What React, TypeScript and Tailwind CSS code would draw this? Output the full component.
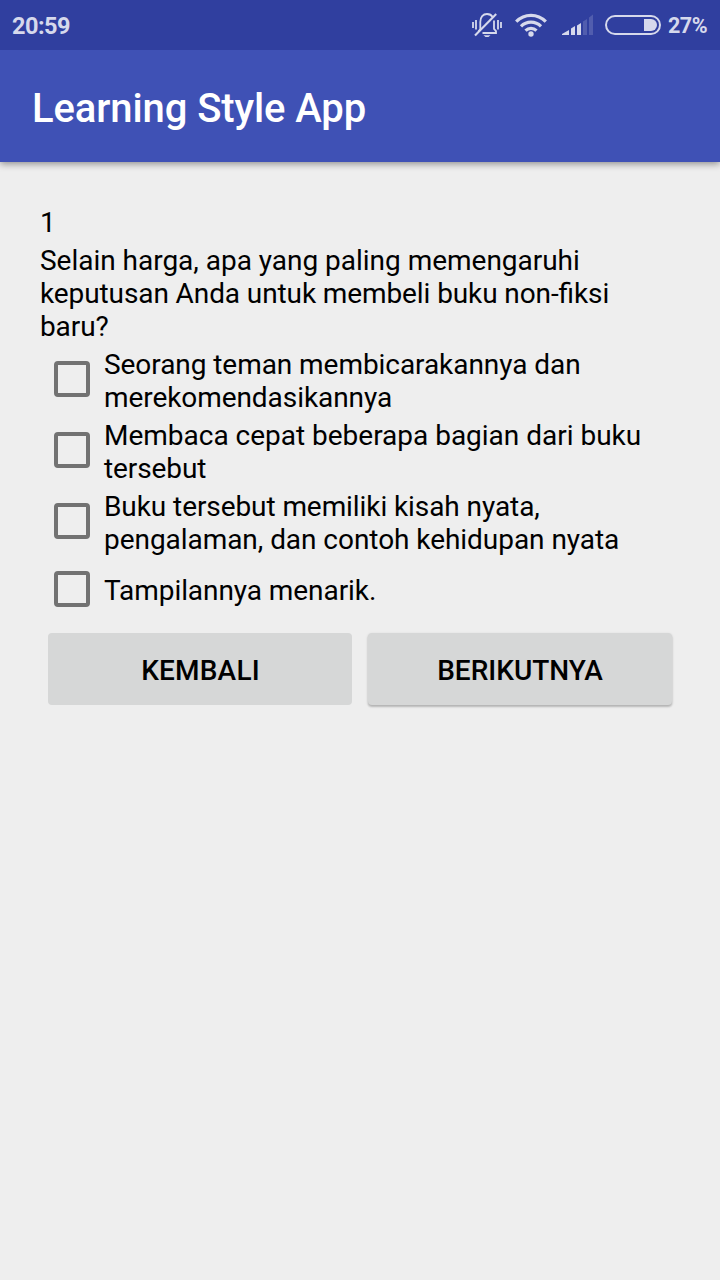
import { useState } from "react";

const options = [
  {
    lines: [
      { text: "Seorang teman membicarakannya dan", tracking: "tracking-[-0.06px]" },
      { text: "merekomendasikannya", tracking: "tracking-[-0.07px]" },
    ],
  },
  {
    lines: [
      { text: "Membaca cepat beberapa bagian dari buku", tracking: "tracking-[-0.01px]" },
      { text: "tersebut", tracking: "tracking-[-0.1px]" },
    ],
  },
  {
    lines: [
      { text: "Buku tersebut memiliki kisah nyata,", tracking: "tracking-[-0.08px]" },
      { text: "pengalaman, dan contoh kehidupan nyata", tracking: "tracking-[-0.05px]" },
    ],
  },
  { lines: [{ text: "Tampilannya menarik.", tracking: "tracking-[-0.07px]" }] },
];

function SilentIcon() {
  return (
    <svg className="ml-auto h-[26px] w-[30px]" viewBox="0 0 30 26" fill="none" stroke="currentColor" strokeWidth="1.8">
      <path d="M6.500 19.500L8.300 17V10C8.300 5 11 2 15 2C17.800 2 19.500 3 20.600 5M22 8.500V17L24 19V21H10.500" />
      <path d="M3 23.500L24.200 2" strokeWidth="2.1" />
      <path d="M11.500 23.200H18.500L16.500 24.900H13.500Z" fill="currentColor" stroke="none" />
      <path d="M1 10V16M4 8V17.500M26 8V17.500M29 10V16" strokeWidth="1.8" />
    </svg>
  );
}

function WifiIcon() {
  return (
    <svg className="ml-[13px] h-6 w-8" viewBox="0 0 32 24" fill="none" stroke="currentColor" strokeWidth="3.2">
      <path d="M1.2 8.7C9.5 0.2 22.500 0.2 30.8 8.7" />
      <path d="M6 13.3C11.700 7.700 20.300 7.700 26 13.3" />
      <path d="M10.500 17.700C13.600 14.700 18.400 14.700 21.500 17.700" />
      <circle cx="16" cy="21" r="2.7" fill="currentColor" stroke="none" />
    </svg>
  );
}

function SignalIcon() {
  return (
    <svg className="ml-[15px] h-[22px] w-8" viewBox="0 0 32 22" fill="currentColor">
      <path d="M0 21V20L7 16V21ZM9 21V14.500L13 12V21ZM15 21V11.500L19 9V21Z" />
      <path d="M21 21V7.500L25 5V21ZM27 21V3.500L31 0.500V21Z" opacity="0.2" />
    </svg>
  );
}

function BatteryIcon() {
  return (
    <svg className="ml-[11px] h-5 w-14" viewBox="0 0 56 20" fill="none">
      <rect x="1" y="1" width="54" height="18" rx="9" stroke="currentColor" strokeWidth="2" />
      <path d="M39 4H46A6 6 0 0 1 46 16H39Z" fill="currentColor" />
    </svg>
  );
}

export default function App() {
  const [checked, setChecked] = useState<boolean[]>([false, false, false, false]);
  const toggle = (i: number) => setChecked((c) => c.map((v, n) => (n === i ? !v : v)));

  return (
    <div className="flex min-h-screen w-full flex-col bg-[#eeeeee] font-['Roboto',sans-serif] text-[28px] leading-[33px] text-black">
      <div className="relative z-10 flex h-[50px] items-center bg-[#303f9f] pr-3 pl-3 text-[#d6d9ec]">
        <span className="pt-0.5 text-[23.500px] leading-7 font-bold tracking-[-0.5px]">20:59</span>
        <SilentIcon />
        <WifiIcon />
        <SignalIcon />
        <BatteryIcon />
        <span className="ml-[7px] w-10 pt-0.5 text-[21.500px] leading-6 font-bold tracking-[-0.5px] whitespace-nowrap">27%</span>
      </div>
      <header className="flex h-28 items-center bg-[#3f51b5] pt-1 pl-8 shadow-[0_2px_7px_rgba(0,0,0,0.4)]">
        <h1 className="text-[40px] leading-[47px] font-medium tracking-[-0.1px] text-white">Learning Style App</h1>
      </header>
      <main className="flex flex-col px-10 pt-11">
        <p>1</p>
        <p className="mt-[5px] whitespace-nowrap">
          <span className="block tracking-[-0.02px]">Selain harga, apa yang paling memengaruhi</span>
          <span className="block tracking-[-0.1px] [font-feature-settings:'liga'_1]">keputusan Anda untuk membeli buku non-fiksi</span>
          <span className="block tracking-[-0.1px]">baru?</span>
        </p>
        <div className="flex flex-col">
          {options.map((option, i) => (
            <label
              key={option.lines[0].text}
              className={option.lines.length > 1 ? "flex h-[71px] items-center pl-3.5" : "flex h-[66px] items-center pl-3.5"}
            >
              <input type="checkbox" className="sr-only" checked={checked[i]} onChange={() => toggle(i)} />
              <span className="flex size-9 items-center justify-center rounded-[4px] border-4 border-[#727272]">
                {checked[i] && <span className="size-5 bg-[#ff4081]" />}
              </span>
              <span className={option.lines.length > 1 ? "ml-3.5 pt-[5px] whitespace-nowrap" : "ml-3.5 pt-[3px] whitespace-nowrap"}>
                {option.lines.map((line) => (
                  <span key={line.text} className={`block ${line.tracking}`}>{line.text}</span>
                ))}
              </span>
            </label>
          ))}
        </div>
        <div className="mt-[11px] grid grid-cols-2 gap-4 px-2 font-medium">
          <button className="h-[72px] rounded-[4px] bg-[#d6d7d7] pt-0.5 pl-px tracking-[0.2px]">KEMBALI</button>
          <button className="h-[72px] rounded-[4px] bg-[#d6d7d7] pt-0.5 shadow-[0_2px_2px_rgba(0,0,0,0.16),0_1px_3px_rgba(0,0,0,0.15)]">BERIKUTNYA</button>
        </div>
      </main>
    </div>
  );
}
